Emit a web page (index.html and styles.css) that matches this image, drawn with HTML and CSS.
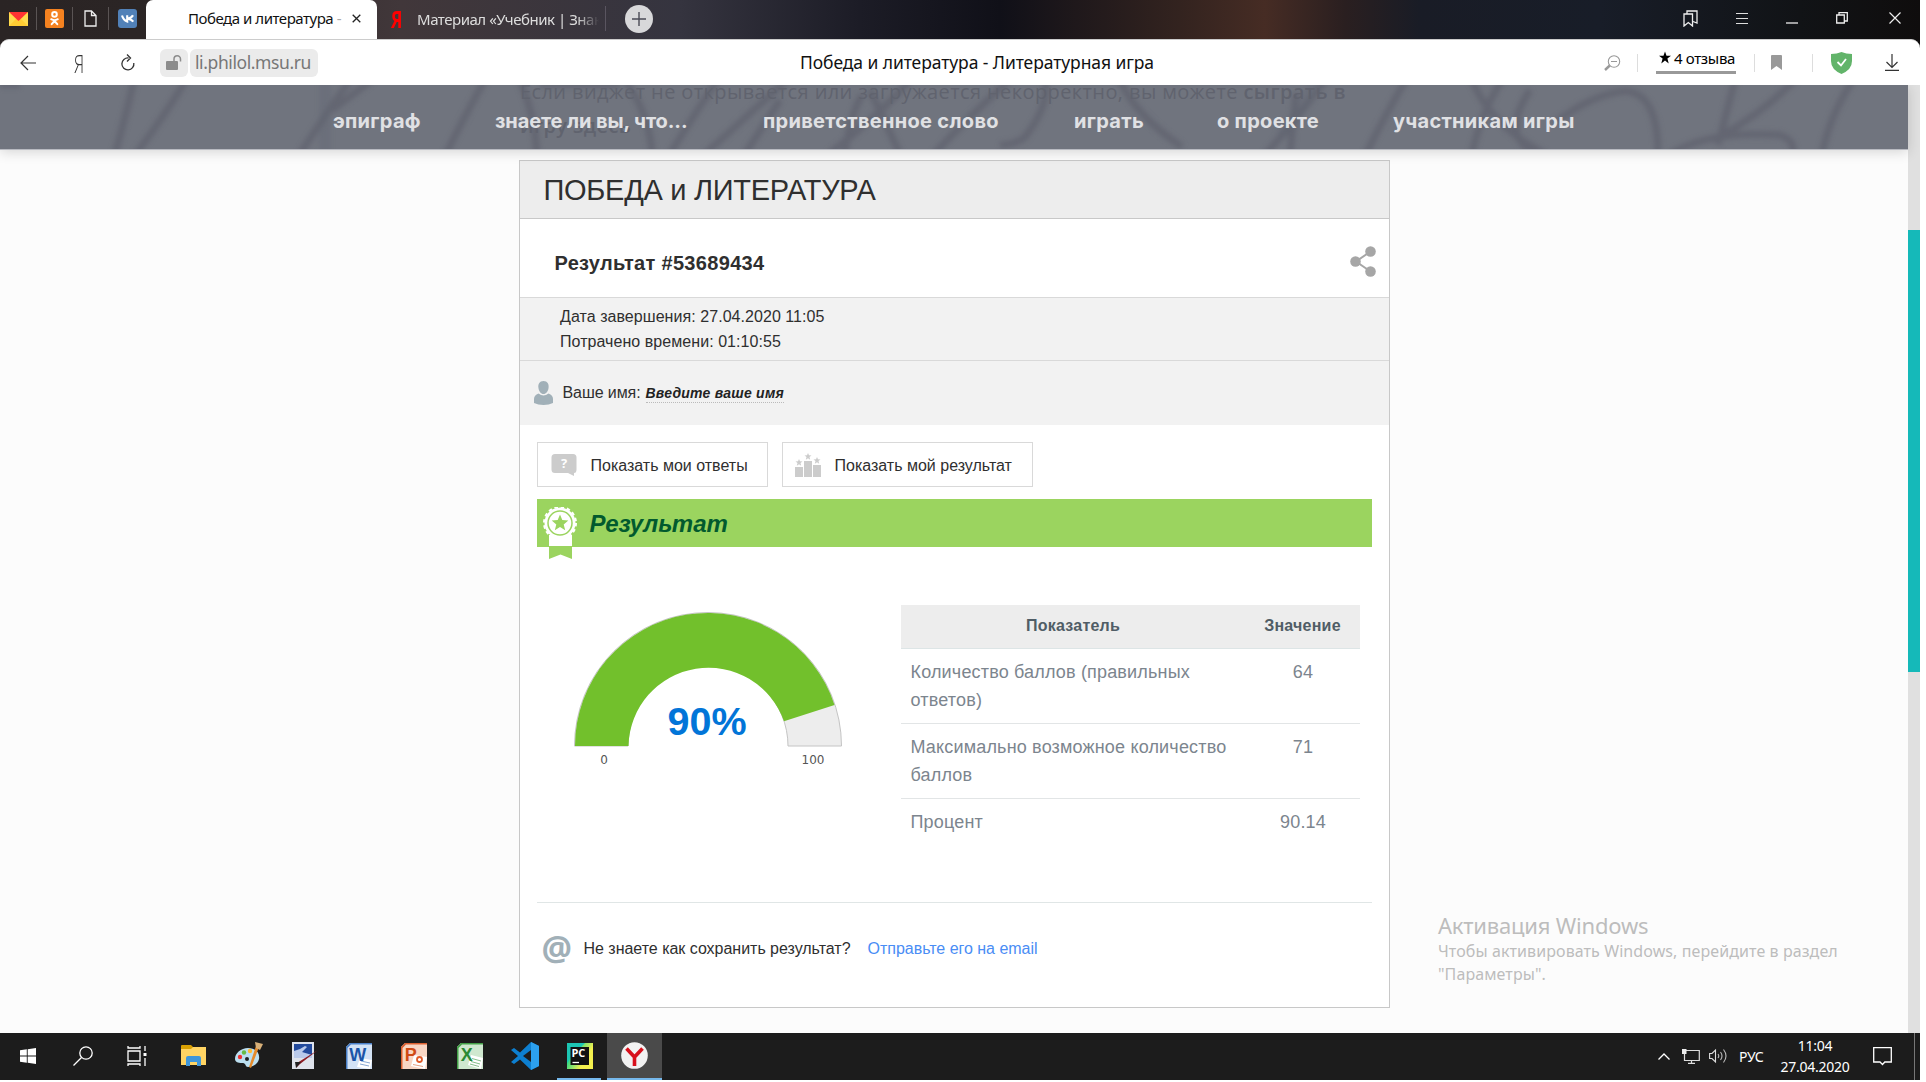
FILE: index.html
```html
<!DOCTYPE html>
<html lang="ru">
<head>
<meta charset="utf-8">
<title>Победа и литература - Литературная игра</title>
<link rel="stylesheet" href="styles.css">
</head>
<body>
<div class="screen">
  <header class="tabbar">
    <div class="pinned">
      <span class="pin"><svg width="19" height="14" viewBox="0 0 19 14"><path fill="#ffdb4d" d="M0 0h19v14H0z"/><path fill="#fc3" d="M0 14l7-7h5l7 7z"/><path fill="#f33" d="M0 0h19l-9.500 9z"/></svg></span>
      <span class="pin"><svg width="19" height="19" viewBox="0 0 19 19"><rect width="19" height="19" rx="2" fill="#f58220"/><g fill="none" stroke="#fff" stroke-width="2" stroke-linecap="round"><circle cx="9.500" cy="5.400" r="2.300"/><path d="M6.200 10.200q3.300 2 6.600 0M9.500 12l-2.800 3.200M9.500 12l2.800 3.200"/></g></svg></span>
      <span class="pin"><svg width="13" height="17" viewBox="0 0 13 17"><path d="M1 1h6.500L12 5.500V16H1zM7.500 1v4.500H12" fill="none" stroke="#eee" stroke-width="1.300"/></svg></span>
      <span class="pin"><svg width="19" height="19" viewBox="0 0 19 19"><rect width="19" height="19" rx="3" fill="#5181b8"/><path d="M4 6.500q1.300 4.500 5.200 6V6.200M15 6.300q-1.500 2.800-5 3.300q3.500.6 5.300 3" fill="none" stroke="#fff" stroke-width="2.100"/></svg></span>
    </div>
    <div class="tab active"><span class="tab-title">Победа и литература <i>-</i></span><svg width="9" height="9" viewBox="0 0 9 9"><path d="M.7.700l7.600 7.600M8.300.7L.7 8.300" stroke="#222" stroke-width="1.300"/></svg></div>
    <div class="tab second"><span class="red-ya">Я</span><span class="tab-title fade">Материал «Учебник | Знак</span></div>
    <div class="plus"><svg width="14" height="14" viewBox="0 0 14 14"><path d="M7 0v14M0 7h14" stroke="#4a4a55" stroke-width="1.400"/></svg></div>
    <div class="window-controls">
      <svg width="15" height="17" viewBox="0 0 15 17"><path d="M1 4h8.500v12L5.300 12.500 1 16zM4 4V1h10v12l-4-1.500" fill="none" stroke="#eee" stroke-width="1.300"/></svg>
      <svg width="12" height="12" viewBox="0 0 12 12"><path d="M0 1.500h12M0 6.500h12M0 11.500h12" stroke="#ddd"/></svg>
      <svg width="12" height="12" viewBox="0 0 12 12"><path d="M0 11h12" stroke="#ddd" stroke-width="1.400"/></svg>
      <svg width="12" height="12" viewBox="0 0 12 12"><path d="M.7 3h7.600v8H.7zM3 3V.7h8.300V9H8.500" fill="none" stroke="#eee" stroke-width="1.300"/></svg>
      <svg width="12" height="12" viewBox="0 0 12 12"><path d="M.5.500l11 11M11.500.5l-11 11" stroke="#eee" stroke-width="1.200"/></svg>
    </div>
  </header>

  <div class="toolbar-wrap"><div class="toolbar">
    <svg class="back" width="16" height="16" viewBox="0 0 16 16"><path d="M16 8H1M8 1L1 8l7 7" fill="none" stroke="#333" stroke-width="1.200"/></svg>
    <span class="ya">Я</span>
    <svg class="reload" width="14" height="17" viewBox="0 0 14 17"><path d="M7.500 4A6 6 0 1 0 12.800 9M6 .5L9.500 4 6 7.500" fill="none" stroke="#333" stroke-width="1.300"/></svg>
    <div class="lock"><svg width="16" height="15" viewBox="0 0 16 15"><rect y="6" width="12" height="9" rx="1" fill="#8c8c8c"/><path d="M8 6V4a3 3 0 0 1 6.500 0v2.500" fill="none" stroke="#8c8c8c" stroke-width="1.500"/></svg></div>
    <div class="url">li.philol.msu.ru</div>
    <div class="page-title">Победа и литература - Литературная игра</div>
    <div class="tools">
      <svg class="mag" width="17" height="16" viewBox="0 0 17 16"><circle cx="10" cy="6.500" r="5.700" fill="none" stroke="#999" stroke-width="1.100"/><path d="M7 6.500h6" stroke="#999"/><path d="M5.800 10.500L1 15" stroke="#999" stroke-width="2.400"/></svg>
      <i class="sep"></i>
      <div class="reviews"><svg width="12" height="13" viewBox="0 0 11 11"><path d="M5.500 0l1.400 4H11L7.700 6.500 8.900 11 5.500 8.300 2.100 11l1.200-4.500L0 4h4.100z"/></svg><span>4 отзыва</span></div>
      <i class="sep"></i>
      <svg class="bm" width="11" height="15" viewBox="0 0 11 15"><path d="M0 1q0-1 1-1h9q1 0 1 1v14L5.500 11 0 15z" fill="#999"/></svg>
      <i class="sep"></i>
      <svg class="shield" width="21" height="22" viewBox="0 0 21 22"><path d="M10.500 0Q15 2 21 2v7q0 8.500-10.500 13Q0 17.500 0 9V2Q6 2 10.500 0z" fill="#62b46a"/><path d="M6.500 10l3.500 3.500 5-6.500" fill="none" stroke="#fff" stroke-width="1.800"/></svg>
      <svg width="14" height="17" viewBox="0 0 14 17"><path d="M7 0v13M1.500 8L7 13.500 12.500 8M0 16.300h14" fill="none" stroke="#333" stroke-width="1.200"/></svg>
    </div>
  </div></div>

  <div class="viewport">
    <main class="page">
      <nav class="nav">
        <svg class="ink" width="1908" height="64" viewBox="0 0 1908 64">
          <defs><filter id="soft" x="-5%" y="-20%" width="110%" height="140%"><feGaussianBlur stdDeviation="2.800"/></filter></defs>
          <g filter="url(#soft)" fill="none" stroke="#5d5f6c" stroke-width="7" opacity=".65">
            <path d="M134-5Q126 30 115 69M186-5Q165 30 136 69M350-5Q325 30 300 69M372-5L332 25M485-5Q465 30 446 69M520-5Q535 30 537 69M625-5Q650 30 652 69M718-5Q700 20 670 69M787-5L705 69M780 15L745 69M862 10Q850 30 845 69M910-5Q885 25 829 69M870 5L900 69M1010-5Q970 30 934 69M1045-5Q1050 20 1025 52Q1015 60 1000 60M1120-5Q1135 30 1182 62M1325-5Q1300 30 1266 69M1296 8L1290 69M1406-5Q1385 30 1366 69M1472-5Q1490 40 1545 69M1502-5Q1480 30 1472 69M1530 5Q1500 50 1535 69M1555 38Q1590 10 1625 6Q1658 8 1658 69M1735-5L1718 60M1795-5Q1760 30 1722 50M1670 69Q1710 45 1780 50Q1795 55 1793 69M1853-5Q1830 30 1822 69"/>
            <path d="M325 -5V69M1315-5Q1300 30 1280 50" stroke-width="12" opacity=".35"/>
            <path d="M0 0H20M540 0H620" stroke-width="6"/>
          </g>
        </svg>
        <div class="ghost">Если виджет не открывается или загружается некорректно, вы можете <b>сыграть в</b><br><b>игру здесь</b></div>
        <div class="links">
          <a>эпиграф</a><a class="tight">знаете ли вы, что...</a><a>приветственное слово</a><a>играть</a><a>о проекте</a><a>участникам игры</a>
        </div>
      </nav>

      <section class="widget">
        <h1>ПОБЕДА и ЛИТЕРАТУРА</h1>
        <div class="result-id">
          <h2>Результат #53689434</h2>
          <svg width="26" height="31" viewBox="0 0 26 31"><path d="M20.500 5.500L6 15.500l14.500 10" fill="none" stroke="#a6a6a6" stroke-width="2"/><g fill="#a6a6a6"><circle cx="20.500" cy="5.500" r="5.300"/><circle cx="5.500" cy="15.500" r="5.300"/><circle cx="20.500" cy="25.500" r="5.300"/></g></svg>
        </div>
        <div class="info">
          <p>Дата завершения: 27.04.2020 11:05</p>
          <p>Потрачено времени: 01:10:55</p>
        </div>
        <div class="name">
          <svg width="19" height="24" viewBox="0 0 19 24"><path d="M9.500 0C13.500 0 15 3 14.600 6.500 14.200 10.500 12 13 9.500 13S4.800 10.500 4.400 6.500C4 3 5.500 0 9.500 0zM4.500 12.500Q9.500 16.500 14.500 12.500 19 14 19 18v4q-4 2-9.500 2T0 22v-4q0-4 4.500-5.500z" fill="#a1b0b8"/></svg>
          <span>Ваше имя:</span>
          <em>Введите ваше имя</em>
        </div>
        <div class="body">
          <div class="buttons">
            <div class="btn"><svg width="26" height="24" viewBox="0 0 26 24"><path d="M4 1h18q3.500 0 3.500 3.500v12q0 3.500-2.500 3.500v3l-6-3H4Q.5 20 .5 16.500v-12Q.5 1 4 1z" fill="#ccc"/><text x="13" y="15" text-anchor="middle" class="q">?</text></svg><span>Показать мои ответы</span></div>
            <div class="btn wide"><svg width="27" height="24" viewBox="0 0 27 24"><g fill="#ccc"><path d="M0 14h8v10H0zM9 8h8v16H9zM18 12h8v12h-8z"/><path id="star" d="M13 0l1 2.300 2.500.2-2 1.600.7 2.600L13 5.300l-2.200 1.400.7-2.600-2-1.600 2.500-.2z"/><use href="#star" x="-9" y="6"/><use href="#star" x="9" y="4"/></g></svg><span>Показать мой результат</span></div>
          </div>
          <div class="banner">
            <svg class="medal" width="36" height="54" viewBox="0 0 36 54"><path d="M7 28h23v11H7z" fill="#fff"/><path d="M7 40h23v12l-11.500-4.500L7 52z" fill="#9bd45f"/><circle cx="18" cy="16" r="15.500" fill="#fff"/><circle cx="18" cy="16" r="16" fill="none" stroke="#fff" stroke-width="2" stroke-dasharray="3.500 2.800"/><circle cx="18" cy="16" r="12" fill="none" stroke="#9bd45f" stroke-width="1.500"/><path d="M18 7.500l2.300 5.600 6 .4-4.600 3.900 1.500 5.900-5.200-3.200-5.200 3.200 1.500-5.900-4.600-3.900 6-.4z" fill="#9bd45f"/></svg>
            <span>Результат</span>
          </div>
          <div class="stats">
            <svg class="gauge" width="270" height="160" viewBox="573 610 270 160">
              <path d="M574.500 746A133.500 133.500 0 0 1 841.500 746H788A80 80 0 0 0 628 746z" fill="#ededed" stroke="#c4c4c4"/>
              <path d="M575 746A133 133 0 0 1 834.500 704.900L784 721.300A80 80 0 0 0 628.500 746z" fill="#72c02c"/>
              <text x="707" y="735" class="pct">90%</text><text x="604" y="764" class="tick">0</text><text x="813" y="764" class="tick">100</text>
            </svg>
            <table>
              <tr><th>Показатель</th><th>Значение</th></tr>
              <tr><td>Количество баллов (правильных ответов)</td><td>64</td></tr>
              <tr><td>Максимально возможное количество баллов</td><td>71</td></tr>
              <tr><td>Процент</td><td>90.14</td></tr>
            </table>
          </div>
          <div class="mail"><span class="at">@</span><span>Не знаете как сохранить результат?</span><a>Отправьте его на email</a></div>
        </div>
      </section>
    </main>
    <div class="scroll"><div class="thumb"></div></div>
    <div class="watermark"><h3>Активация Windows</h3><p>Чтобы активировать Windows, перейдите в раздел</p><p>"Параметры".</p></div>
  </div>

  <footer class="taskbar">
    <div class="apps">
      <span><svg width="16" height="16" viewBox="0 0 16 16"><path fill="#fff" d="M0 2.200L6.800 1.300v6.300H0zM7.700 1.200L16 0v7.600H7.700zM0 8.400h6.800v6.300L0 13.800zM7.700 8.400H16V16l-8.300-1.200z"/></svg></span>
      <span><svg width="20" height="20" viewBox="0 0 20 20"><circle cx="13" cy="7" r="6.200" fill="none" stroke="#fff" stroke-width="1.300"/><path d="M8.500 11.500L.5 19.500" stroke="#fff" stroke-width="1.300"/></svg></span>
      <span><svg width="21" height="20" viewBox="0 0 21 20"><path d="M1 5h12v10H1zM1 0v2h12V0M1 20v-2h12v2M18 0v5M18 12v8" fill="none" stroke="#fff" stroke-width="1.300"/><path d="M16.500 7h3v3h-3z" fill="#fff"/></svg></span>
      <span class="app"><svg width="26" height="21" viewBox="0 0 26 21"><path d="M0 1q0-1 1-1h9l2 2h13v3H0z" fill="#d9a002"/><path d="M0 4h10l2-2h13v18H0z" fill="#ffd463"/><path d="M5 21v-8q0-2 2-2h11q2 0 2 2v8h-4v-4H9v4z" fill="#3f96d9"/></svg></span>
      <span class="app"><svg width="28" height="27" viewBox="0 0 28 27"><path d="M13 6c8 0 12 5 11 11-1 5-6 8-11 8-3 0-2-4-5-4S0 21 0 17C0 11 6 6 13 6z" fill="#bcdff0"/><circle cx="5" cy="15" r="2.200" fill="#e33"/><circle cx="9" cy="10.500" r="2.200" fill="#6b4"/><circle cx="15" cy="9" r="2.200" fill="#fb3"/><circle cx="12" cy="17" r="2" fill="#222"/><path d="M24 5L16 26l-2-1L21 4z" fill="#e58a2a"/><path d="M20 0l8 2-3 6-4-2z" fill="#d8b078"/></svg></span>
      <span class="app"><svg width="26" height="27" viewBox="0 0 26 27"><path d="M0 0h22v27H0z" fill="#dfe3ec"/><path d="M2 2h18v14H2z" fill="#234a9c"/><path d="M2 9L8 7l5-3 2 1-5 5 10 3v3H2z" fill="#b9c9ea"/><path d="M26 8L8 22l-4 4 1-5z" fill="#8c1c24"/><path d="M3 20h6l-5 6z" fill="#222"/></svg></span>
      <span class="app"><svg width="27" height="26" viewBox="0 0 27 26"><path d="M4 0h22v26H0V4z" fill="#d3e2f5"/><path d="M0 4L4 0h22v1.500H5L1.500 5v21H0z" fill="#4a80c8"/><path d="M14 15l12 2-2 9-13-2z" fill="#fff"/><path d="M15 18l9 2M14 21l9 2" stroke="#88a8d4"/><text x="11.500" y="18" class="office" fill="#1c55a8">W</text></svg></span>
      <span class="app"><svg width="27" height="26" viewBox="0 0 27 26"><path d="M4 0h22v26H0V4z" fill="#f8d6c4"/><path d="M0 4L4 0h22v1.500H5L1.500 5v21H0z" fill="#dc6030"/><path d="M13 12l13 2-2 12-14-3z" fill="#fff"/><circle cx="18.500" cy="16.500" r="2.500" fill="none" stroke="#e05a28" stroke-width="1.800"/><path d="M12 21.500l10 2" stroke="#e8a080"/><text x="9.500" y="18" class="office" fill="#d04a14">P</text></svg></span>
      <span class="app"><svg width="27" height="26" viewBox="0 0 27 26"><path d="M4 0h22v26H0V4z" fill="#cfe8cf"/><path d="M0 4L4 0h22v1.500H5L1.500 5v21H0z" fill="#43a047"/><path d="M14 12l12 3-2 11-13-4z" fill="#fff"/><path d="M15 15.500l9 2.500M14 18.500l9 2.500M13 21l9 2.500" stroke="#86c08a"/><text x="9.500" y="18" class="office" fill="#2a8a34">X</text></svg></span>
      <span class="app"><svg width="28" height="28" viewBox="0 0 28 28"><path d="M20 0l8 4v20l-8 4L9 17.500 3 22l-3-2 7-6-7-6 3-2 6 4.500z" fill="#0d7fd0"/><path d="M20 0l8 4v20l-8 4z" fill="#2ca0ee"/><path d="M20 8v12l-8-6z" fill="#1c1c1c"/></svg></span>
      <span class="app open"><svg width="26" height="26" viewBox="0 0 26 26"><defs><linearGradient id="pc" x2="1" y2=".6"><stop offset=".3" stop-color="#21d789"/><stop offset=".8" stop-color="#f4f04e"/></linearGradient></defs><path d="M0 0h26v26H0z" fill="url(#pc)"/><path d="M0 0h18L6 12 0 20z" fill="#1cc6b4"/><path d="M3.500 4h18.500v18H3.500z" fill="#111"/><text x="4.500" y="14" class="pc">PC</text><path d="M5.500 19.500h6.500" stroke="#fff" stroke-width="1.300"/></svg></span>
      <span class="current"><svg width="27" height="27" viewBox="0 0 27 27"><circle cx="13.500" cy="13.500" r="13.300" fill="#f2f2f2"/><path d="M5.500 6.500l8 8.500 8-8.500M13.500 14v10" fill="none" stroke="#d8101c" stroke-width="3.600"/></svg></span>
    </div>
    <div class="tray">
      <svg width="12" height="7" viewBox="0 0 12 7"><path d="M.5 6.500L6 1l5.500 5.500" fill="none" stroke="#fff" stroke-width="1.300"/></svg>
      <svg class="net" width="18" height="15" viewBox="0 0 18 15"><path d="M4 1.500h13.300v10H2.500V5M6 14.300h7M9.500 12v2" fill="none" stroke="#ddd" stroke-width="1.200"/><path d="M0 0h4.500v5H0z" fill="#eee"/></svg>
      <svg class="snd" width="19" height="16" viewBox="0 0 19 16"><path d="M.6 5.500H3L6.500 2v12L3 10.500H.6z" fill="none" stroke="#ddd" stroke-width="1.100"/><path d="M9 6q1.500 2 0 4M11.500 4q3 4 0 8M14.500 1.500q5 6.500 0 13" fill="none" stroke="#bbb" stroke-width="1.100"/></svg>
      <span class="lang">РУС</span>
      <div class="clock"><span>11:04</span><span>27.04.2020</span></div>
      <svg class="note" width="19" height="19" viewBox="0 0 19 19"><path d="M.7.700h17.600v14.300h-6.500L9.500 17.500 7 15H.7z" fill="none" stroke="#fff" stroke-width="1.300"/></svg>
      <i class="peek"></i>
    </div>
  </footer>
</div>
</body>
</html>
```
FILE: styles.css
```css
* { box-sizing: border-box; }
body { margin: 0; background: #fff; font-family: "Liberation Sans", Arial, sans-serif; color: #2f2f2f; }
h1, h2, h3, p { margin: 0; font-weight: normal; }
svg { display: block; flex: none; }
.screen { width: 1920px; height: 1080px; display: flex; flex-direction: column; overflow: hidden; white-space: nowrap; }

/* browser tabs */
.tabbar { height: 39px; display: flex; font: 15px/36px "Noto Sans", sans-serif; background: linear-gradient(90deg, #2a2424 0, #2b2525 140px, #41373a 400px, #35343f 680px, #1c1c26 860px, #101018 1000px, #33231f 1180px, #462c24 1265px, #2a1f20 1345px, #191c26 1420px, #181d28 1600px, #111316 1800px, #0f0d0d 1920px); }
.pinned { display: flex; width: 146px; height: 37px; align-items: center; padding-left: 1px; }
.pin { width: 36.500px; height: 23px; display: flex; align-items: center; justify-content: center; border-right: 1px solid #5a5454; }
.pin:last-child { border: 0; width: 37px; }
.tab { display: flex; align-items: center; height: 37px; }
.tab-title { letter-spacing: -.47px; }
.tab-title i { color: #aaa; font-style: normal; }
.active { width: 231px; height: 39px; padding: 0 16px 3px 42px; background: #fff; color: #111; border-radius: 7px 7px 0 0; justify-content: space-between; }
.second { width: 229px; padding-left: 14px; color: #ddd; border-right: 1px solid transparent; border-image: linear-gradient(transparent 7px, #5a5560 7px, #5a5560 30px, transparent 30px) 1; }
.red-ya { color: #f00; font: bold 23px/36px "Open Sans", sans-serif; width: 26px; transform: scaleX(.75); transform-origin: left; }
.fade { width: 183px; overflow: hidden; -webkit-mask-image: linear-gradient(90deg, #000 160px, transparent 182px); }
.plus { width: 28px; height: 28px; margin: 5px 0 0 19px; border-radius: 50%; background: #d8d8da; display: flex; align-items: center; justify-content: center; }
.window-controls { margin-left: auto; display: flex; gap: 38px; height: 36px; align-items: center; padding-right: 19px; }
.window-controls svg:last-child { margin-left: 3px; }

/* address bar */
.toolbar-wrap { background: linear-gradient(90deg, #2a2424 50%, #0f0d0d 50%); }
.toolbar { height: 46px; background: #fff; border-top: 1px solid #ccc; border-radius: 9px 9px 0 0; display: flex; align-items: center; font: 17.500px/28px "Noto Sans", sans-serif; color: #111; }
.back { margin-left: 20px; }
.ya { margin-left: 38px; width: 12px; font: 300 26px/36px "Open Sans", sans-serif; color: #333; transform: scaleX(.65); transform-origin: left; }
.reload { margin-left: 35px; }
.lock { margin-left: 25px; width: 28px; height: 28px; border-radius: 6px; background: #ebebeb; display: flex; align-items: center; justify-content: center; }
.url { margin-left: 2px; width: 128px; height: 28px; padding-left: 5px; border-radius: 6px; background: #ebebeb; color: #777; letter-spacing: -.4px; line-height: 27px; }
.page-title { margin-left: 482px; flex: 1; letter-spacing: -.08px; line-height: 27px; padding-bottom: 1px; }
.tools { width: 316px; display: flex; align-items: center; height: 45px; }
.sep { width: 1px; height: 18px; background: #ddd; }
.mag { margin-right: 16px; }
.reviews { width: 80px; height: 26px; margin: 0 18px 4px 18px; padding: 0 0 3px 3px; display: flex; gap: 3px; align-items: center; border-bottom: 3px solid #999; font-size: 15px; letter-spacing: -.34px; color: #000; }
.bm { margin: 0 30px 0 16px; }
.shield { margin: 0 33px 0 18px; }

/* page */
.viewport { flex: 1; display: flex; background: #fcfcfc; position: relative; overflow: hidden; }
.page { width: 1908px; display: flex; flex-direction: column; align-items: center; }
.scroll { width: 12px; background: #e0e0e0; padding-top: 145px; }
.thumb { height: 442px; background: #15b9b9; }
.nav { width: 1908px; height: 65px; background: #70747e; border-bottom: 1px solid #b8bac1; box-shadow: 0 2px 12px rgba(0,0,0,.16); position: relative; }
.ink { position: absolute; left: 0; top: 0; }
.ghost { position: absolute; left: 520px; top: -10px; color: #60636e; font: 20px/34px "Open Sans", sans-serif; letter-spacing: .4px; }
.ghost b { font-weight: 600; }
.links { position: relative; display: grid; grid-template-columns: 162px 268px 311px 143px 176px auto; padding: 5px 0 0 333px; font: 700 20px/62px Inter, sans-serif; height: 64px; letter-spacing: .3px; color: #e0e1e4; }
.tight { letter-spacing: -.1px; }

.widget { width: 871px; height: 848px; margin-top: 10px; background: #fff; border: 1px solid #c8c8c8; }
.widget h1 { height: 58px; background: #ededed; border-bottom: 1px solid #c8c8c8; padding-left: 24px; font-size: 29px; line-height: 58px; letter-spacing: -.28px; }
.result-id { height: 79px; border-bottom: 1px solid #d9d9d9; padding: 12px 13px 12px 35px; display: flex; justify-content: space-between; align-items: flex-start; }
.result-id h2 { font-weight: bold; font-size: 20px; line-height: 65px; letter-spacing: .32px; }
.result-id svg { margin-top: 15px; }
.info { height: 63px; background: #f2f2f2; border-bottom: 1px solid #d9d9d9; padding: 6px 0 0 40.500px; font-size: 16px; line-height: 25px; letter-spacing: .055px; }
.name { height: 64px; background: #f2f2f2; display: flex; align-items: center; padding-left: 14px; font-size: 16px; letter-spacing: -.09px; }
.name svg { margin-right: 10px; }
.name em { margin: 2px 0 0 5px; font-weight: bold; font-size: 14px; line-height: 17px; letter-spacing: .24px; border-bottom: 1px dotted #bbb; color: #222; }
.body { padding: 17px 17px 0; }
.buttons { display: flex; gap: 14px; height: 45px; }
.btn { width: 231px; border: 1px solid #d9d9d9; display: flex; align-items: center; gap: 14px; padding-left: 13px; font-size: 16px; }
.btn span { padding-top: 2px; }
.wide { width: 251px; gap: 13px; padding-left: 12px; }
.q { font: bold 13px "Open Sans", sans-serif; fill: #fff; }
.banner { margin-top: 12px; height: 48px; background: #9bd45f; display: flex; padding-left: 5px; font: italic bold 24px/49px "Liberation Sans", sans-serif; color: #025a2e; }
.medal { margin: 8px 12px 0 0; }
.stats { display: flex; justify-content: space-between; padding: 58px 12px 0 36px; height: 355px; }
.gauge { margin-top: 5px; }
.pct { font: bold 39.500px "Liberation Sans", sans-serif; fill: #0275d8; text-anchor: middle; }
.tick { font: 12px "DejaVu Sans", sans-serif; fill: #555; text-anchor: middle; }
table { width: 459px; border-collapse: collapse; align-self: flex-start; table-layout: fixed; font-size: 18px; line-height: 28px; letter-spacing: .17px; color: #7c858e; white-space: normal; }
th { height: 43px; padding: 0; background: #ededed; border-bottom: 1px solid #dde5e6; font-size: 16px; letter-spacing: .24px; color: #505d66; }
th:first-child { width: 345px; }
th:last-child { width: 114px; }
td { padding: 9px 9px 9px 10px; vertical-align: top; border-bottom: 1px solid #e2e5e6; }
tr:last-child td { border: 0; }
td:last-child { text-align: center; }
.mail { border-top: 1px solid #e0e6e6; display: flex; align-items: center; height: 93px; font-size: 16px; letter-spacing: -.02px; padding-left: 5px; }
.at { font: bold 34px/34px "Open Sans", sans-serif; color: #a1b0b8; width: 42px; padding-bottom: 5px; }
.mail a { margin-left: 17px; color: #4a8df5; }

.watermark { position: absolute; left: 1438px; top: 825px; font: 16px/23px "Noto Sans", sans-serif; letter-spacing: .09px; color: #bdbdbd; }
.watermark h3 { font-size: 22px; line-height: 30px; letter-spacing: -.2px; }

/* taskbar */
.taskbar { height: 47px; background: #1c1c1c; display: flex; color: #fff; font: 14px/21px "Noto Sans", sans-serif; letter-spacing: -.28px; }
.apps { display: grid; grid-template-columns: repeat(12, 55.200px); }
.apps span { display: flex; align-items: center; justify-content: center; padding-bottom: 2px; }
.apps .app { padding-left: 2px; }
.open { background: linear-gradient(#76b9ed, #76b9ed) center bottom / 44px 2px no-repeat; }
.apps .current { background: #4a4a4a; border-bottom: 2px solid #76b9ed; padding-bottom: 1px; }
.office { font: bold 18px "Liberation Sans", sans-serif; text-anchor: middle; }
.pc { font: bold 11px "Open Sans", sans-serif; fill: #fff; }
.tray { margin-left: auto; display: flex; align-items: center; padding-bottom: 1px; }
.net { margin-left: 12px; }
.snd { margin-left: 9px; }
.lang { width: 25px; margin-left: 11px; }
.clock { width: 86px; margin-left: 8px; display: flex; flex-direction: column; align-items: center; }
.note { margin-left: 15px; }
.peek { width: 1px; height: 47px; background: #777; margin: 0 5px 0 22px; }
```
